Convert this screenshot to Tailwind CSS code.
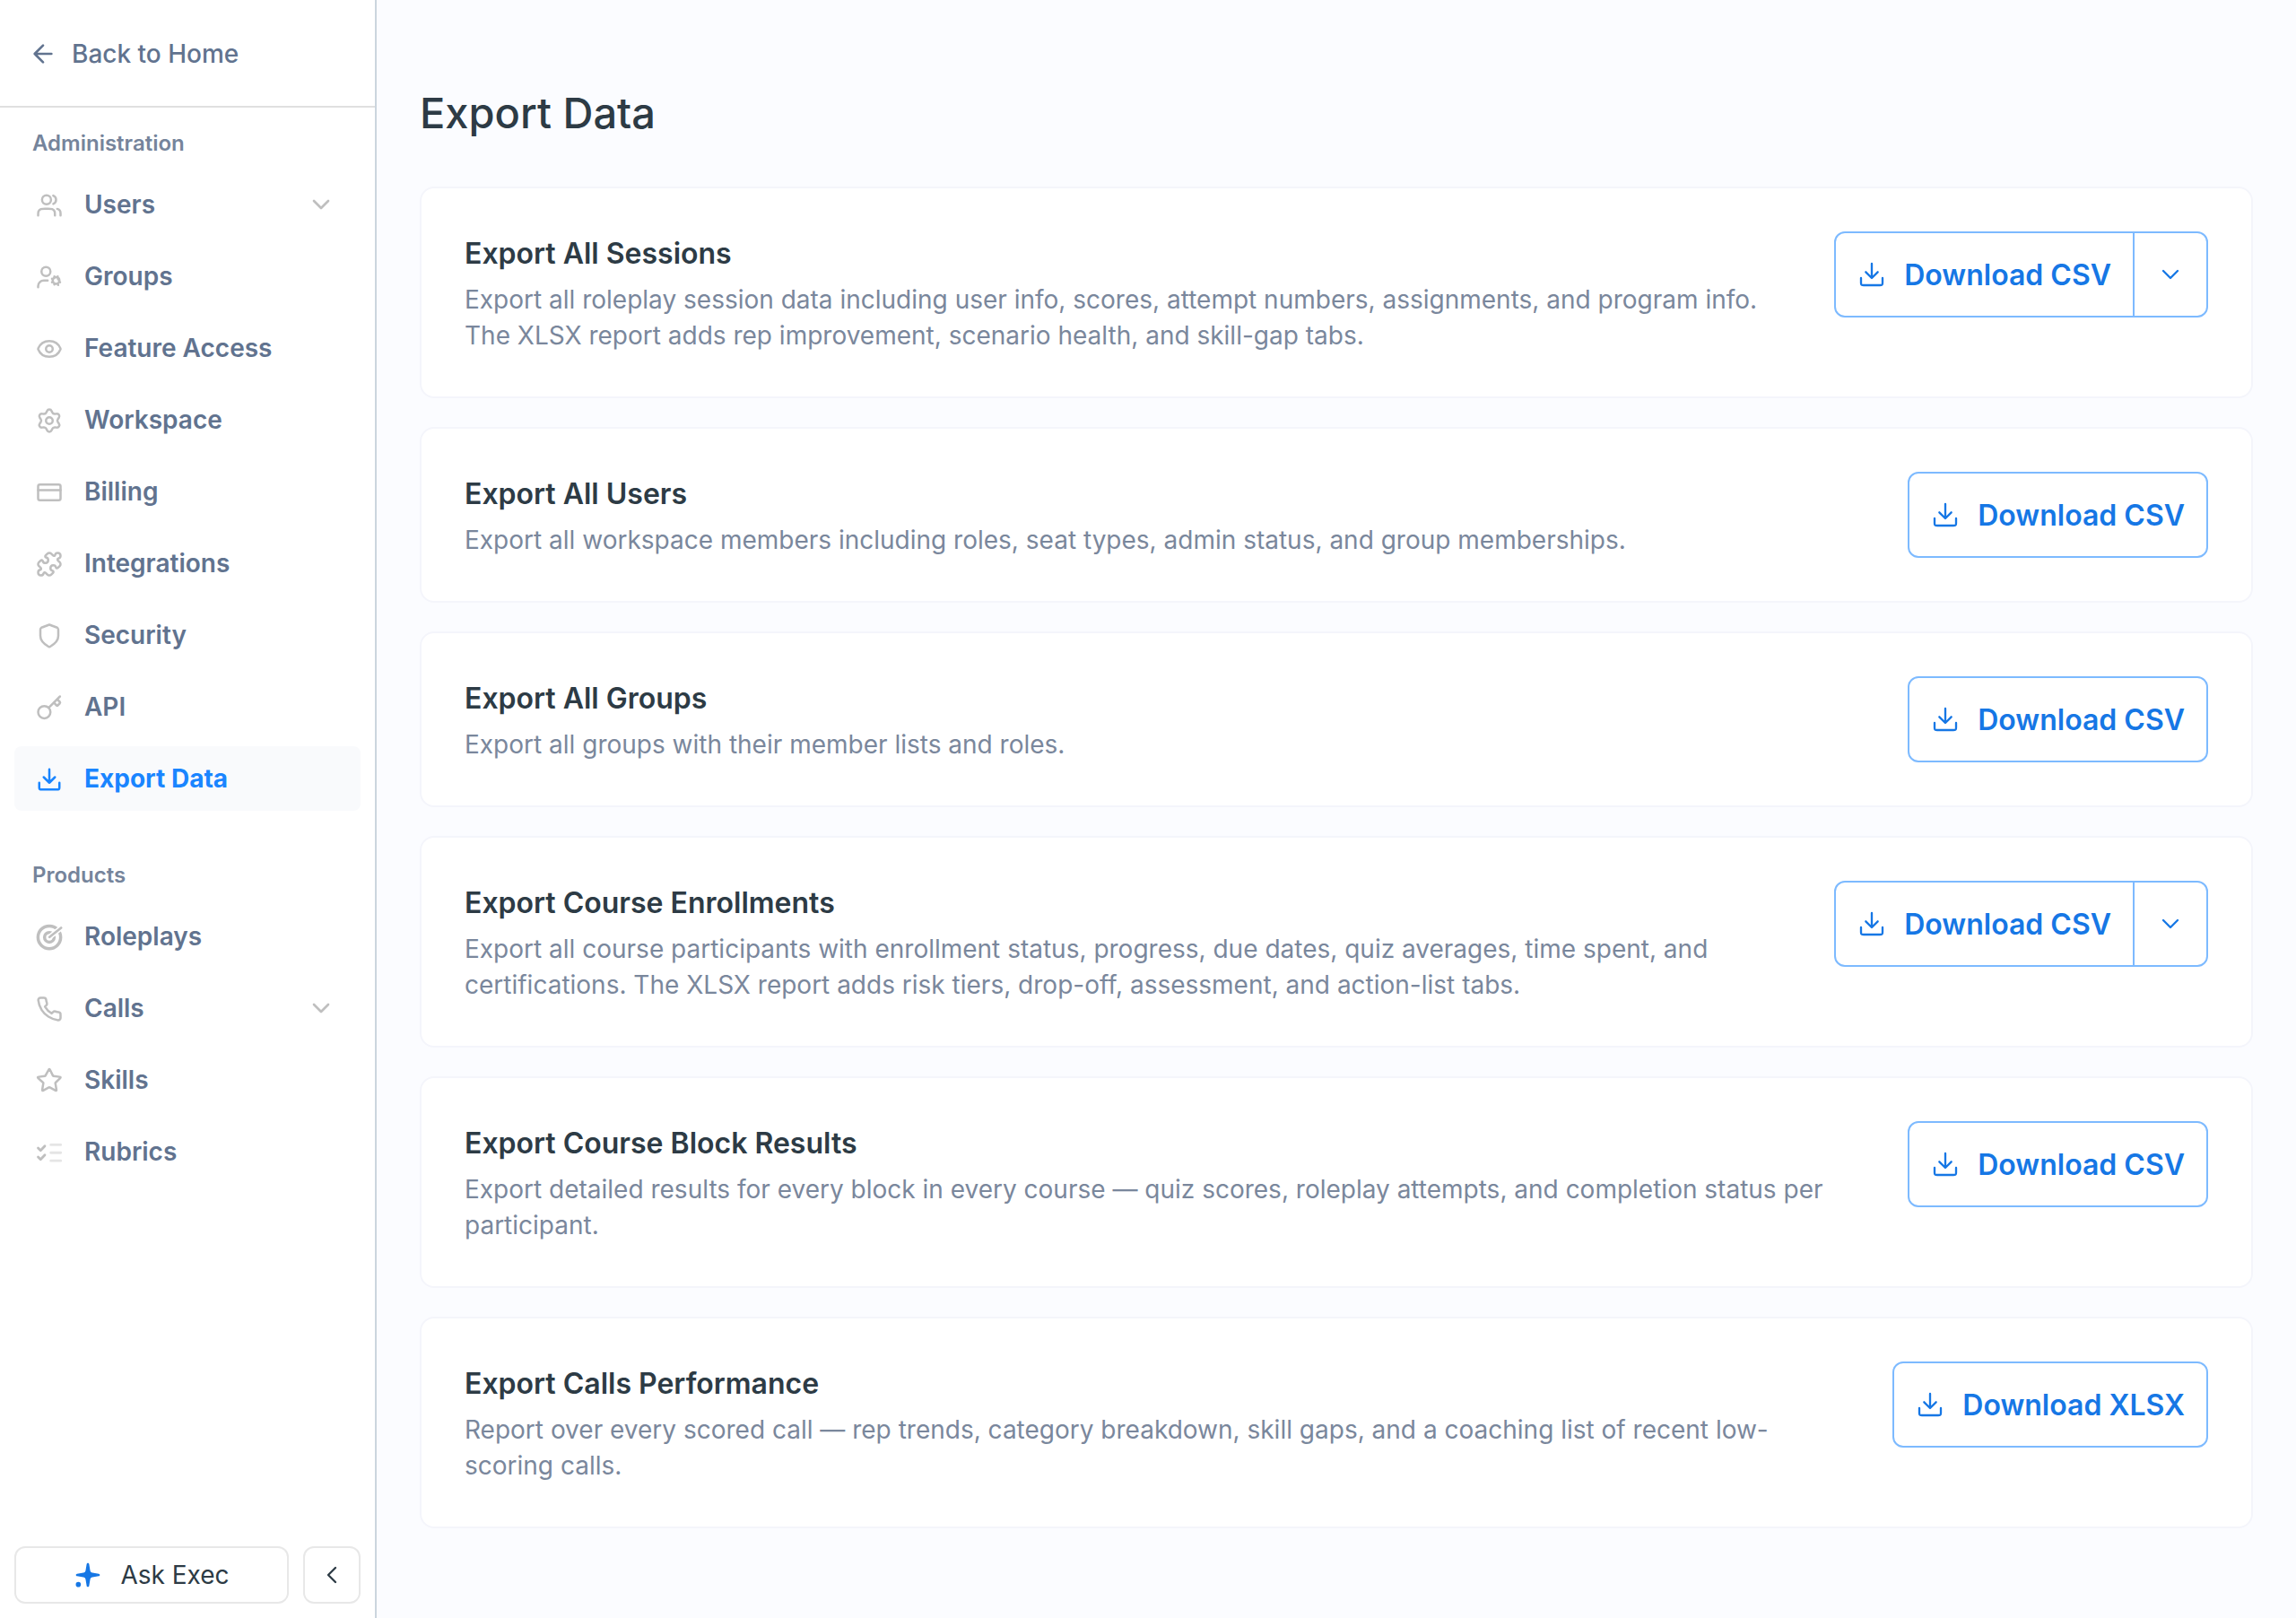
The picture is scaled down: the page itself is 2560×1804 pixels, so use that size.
<!DOCTYPE html>
<html lang="en">
<head>
    <meta charset="UTF-8">
    <meta name="viewport" content="width=device-width, initial-scale=1.0">
    <script src="https://cdn.jsdelivr.net/npm/@tailwindcss/browser@4"></script>
    <title>Export Data</title>
</head>
<body class="flex min-h-screen bg-[#fbfcff] font-[Inter,sans-serif] text-[28px] leading-10 text-[#2d3b45]">

<!-- Icon sprite -->
<svg class="hidden">
    <symbol id="i-arrow-left" viewBox="0 0 24 24"><path d="M19 12H5m0 0 7 7m-7-7 7-7"/></symbol>
    <symbol id="i-chevron-down" viewBox="0 0 24 24"><path d="m6 9 6 6 6-6"/></symbol>
    <symbol id="i-chevron-left" viewBox="0 0 24 24"><path d="m15 18-6-6 6-6"/></symbol>
    <symbol id="i-download" viewBox="0 0 24 24"><path d="M21 15v3.8c0 .77 0 1.15-.17 1.45a1.4 1.4 0 0 1-.58.58c-.3.17-.68.17-1.45.17H5.2c-.77 0-1.15 0-1.45-.17a1.4 1.4 0 0 1-.58-.58C3 19.95 3 19.57 3 18.8V15m14-5-5 5m0 0-5-5m5 5V3"/></symbol>
    <symbol id="i-users" viewBox="0 0 24 24"><path d="M22 21v-2a4 4 0 0 0-3-3.87M15.5 3.29a4 4 0 0 1 0 7.42M17 21c0-1.86 0-2.8-.3-3.53a4 4 0 0 0-2.17-2.17C13.8 15 12.86 15 11 15H8c-1.86 0-2.8 0-3.53.3a4 4 0 0 0-2.17 2.17C2 18.2 2 19.14 2 21M13.5 7a4 4 0 1 1-8 0 4 4 0 0 1 8 0Z"/></symbol>
    <symbol id="i-user-cog" viewBox="0 0 24 24"><circle cx="9" cy="7" r="4"/><path d="M2 21v-1a5 5 0 0 1 5-5h3.5"/><circle cx="18" cy="15" r="3"/><path d="m16.5 11.4.4.9m4.7 4.2-.9-.4m-4.2 2.5.4-.9m2.6-6.3-.4.9m-4.7 1.2.9.4m4.2 4.2.4.9m-5.5-2.5.9-.4m5.4-2.6-.9.4"/></symbol>
    <symbol id="i-eye" viewBox="0 0 24 24"><path d="M2.06 12.35a1 1 0 0 1 0-.7C3.7 7.6 7.6 5 12 5s8.3 2.6 9.94 6.65a1 1 0 0 1 0 .7C20.3 16.4 16.4 19 12 19s-8.3-2.6-9.94-6.65Z"/><circle cx="12" cy="12" r="3"/></symbol>
    <symbol id="i-settings" viewBox="0 0 24 24"><circle cx="12" cy="12" r="3"/><path d="m9.4 19.37.58 1.32a2.21 2.21 0 0 0 4.04 0l.59-1.32a2.43 2.43 0 0 1 2.47-1.43l1.43.16a2.21 2.21 0 0 0 2.02-3.5l-.85-1.17a2.43 2.43 0 0 1 0-2.86l.85-1.17a2.21 2.21 0 0 0-2.02-3.5l-1.43.16a2.43 2.43 0 0 1-2.48-1.43l-.58-1.32a2.21 2.21 0 0 0-4.04 0l-.59 1.32a2.43 2.43 0 0 1-2.48 1.43L5.49 5.9a2.21 2.21 0 0 0-2.02 3.5l.85 1.17a2.43 2.43 0 0 1 0 2.86l-.85 1.17a2.21 2.21 0 0 0 2.02 3.5l1.43-.16a2.43 2.43 0 0 1 2.48 1.43Z"/></symbol>
    <symbol id="i-card" viewBox="0 0 24 24"><rect x="2" y="5" width="20" height="14" rx="1.6"/><path d="M2 10h20"/></symbol>
    <symbol id="i-puzzle" viewBox="0 0 24 24"><path d="M15.39 4.39a1 1 0 0 0 1.68-.474 2.5 2.5 0 1 1 3.014 3.015 1 1 0 0 0-.474 1.68l1.683 1.682a2.414 2.414 0 0 1 0 3.414L19.61 15.39a1 1 0 0 1-1.68-.474 2.5 2.5 0 1 0-3.014 3.015 1 1 0 0 1 .474 1.68l-1.683 1.682a2.414 2.414 0 0 1-3.414 0L8.61 19.61a1 1 0 0 0-1.68.474 2.5 2.5 0 1 1-3.014-3.015 1 1 0 0 0 .474-1.68l-1.683-1.682a2.414 2.414 0 0 1 0-3.414L4.39 8.61a1 1 0 0 1 1.68.474 2.5 2.5 0 1 0 3.014-3.015 1 1 0 0 1-.474-1.68l1.683-1.682a2.414 2.414 0 0 1 3.414 0z"/></symbol>
    <symbol id="i-shield" viewBox="0 0 24 24"><path d="M20 12c0 4.9-5.35 8.47-7.3 9.61-.22.13-.33.2-.49.23a1 1 0 0 1-.42 0c-.16-.03-.27-.1-.49-.23C9.35 20.47 4 16.9 4 12V7.22c0-.8 0-1.2.13-1.55a2 2 0 0 1 .55-.79c.28-.24.65-.38 1.4-.66l5.36-2.01c.2-.08.31-.12.42-.14a1 1 0 0 1 .28 0c.11.02.22.06.42.14l5.36 2.01c.75.28 1.12.42 1.4.66.25.21.44.48.55.79.13.34.13.74.13 1.55V12Z"/></symbol>
    <symbol id="i-key" viewBox="0 0 24 24"><circle cx="7.5" cy="16" r="5.5"/><path d="M11.4 12.1 21.5 2m-5.5 5.5 2.3 2.3a1 1 0 0 0 1.4 0l1.6-1.6a1 1 0 0 0 0-1.4L19 4.5"/></symbol>
    <symbol id="i-target" viewBox="0 0 24 24"><circle cx="12" cy="12" r="10.1" stroke-width="2.8"/><circle cx="12" cy="12" r="4.3" stroke-width="2.8"/><path d="M12 12 23.5 2.8" stroke="#fff" stroke-width="4.6"/><path d="M12.2 11.8 22.5 3.6" stroke-width="2.2"/></symbol>
    <symbol id="i-phone" viewBox="0 0 24 24"><path d="M22 16.92v3a2 2 0 0 1-2.18 2 19.79 19.79 0 0 1-8.63-3.07 19.5 19.5 0 0 1-6-6 19.79 19.79 0 0 1-3.07-8.67A2 2 0 0 1 4.11 2h3a2 2 0 0 1 2 1.72c.13.96.36 1.9.7 2.81a2 2 0 0 1-.45 2.11L8.09 9.91a16 16 0 0 0 6 6l1.27-1.27a2 2 0 0 1 2.11-.45c.91.34 1.85.57 2.81.7A2 2 0 0 1 22 16.92Z"/></symbol>
    <symbol id="i-star" viewBox="0 0 24 24"><path d="M11.28 2.45c.23-.47.35-.7.5-.78a.5.5 0 0 1 .44 0c.15.08.27.31.5.78l2.39 4.83c.07.14.1.2.15.26a.5.5 0 0 0 .16.12c.07.03.15.04.3.06l5.3.78c.51.07.77.11.88.24a.5.5 0 0 1 .14.41c-.02.17-.21.35-.58.71l-3.84 3.74c-.11.11-.17.17-.2.23a.5.5 0 0 0-.07.2c0 .07.01.15.04.3l.91 5.28c.09.51.13.77.05.92a.5.5 0 0 1-.36.26c-.17.03-.39-.09-.85-.33l-4.74-2.5c-.14-.07-.2-.11-.28-.12a.5.5 0 0 0-.2 0c-.07.01-.14.05-.28.12l-4.74 2.5c-.46.24-.69.36-.85.33a.5.5 0 0 1-.36-.26c-.08-.15-.04-.41.05-.92l.91-5.28c.03-.15.04-.23.04-.3a.5.5 0 0 0-.07-.2 1 1 0 0 0-.2-.23L2.26 9.86c-.37-.36-.56-.54-.58-.71a.5.5 0 0 1 .14-.41c.11-.13.37-.17.88-.24l5.3-.78c.15-.02.23-.03.3-.06a.5.5 0 0 0 .16-.12c.05-.06.08-.12.15-.26l2.67-4.83Z"/></symbol>
    <symbol id="i-checklist" viewBox="0 0 24 24"><path d="m2 8 2.2 2.2L8 6.2M2 16l2.2 2.2L8 14.2" stroke-width="2.2"/><path d="M13.3 5.1h8.9m-8.9 7.1h8.9m-8.9 7.1h8.9" stroke-width="2.2" opacity=".4"/></symbol>
    <symbol id="i-sparkle" viewBox="0 0 24 24"><path fill="currentColor" stroke="none" d="M12 2c.6 0 .9.4 1 .9l.9 5.3c.2 1.1.8 1.8 1.9 1.9l5.3.9c.5.1.9.4.9 1s-.4.9-.9 1l-5.3.9c-1.1.1-1.7.8-1.9 1.9l-.9 5.3c-.1.5-.4.9-1 .9s-.9-.4-1-.9l-.9-5.3c-.2-1.1-.8-1.8-1.9-1.9L2.900 13c-.5-.1-.9-.4-.9-1s.4-.9.9-1l5.300-.9c1.100-.1 1.700-.8 1.900-1.900l.9-5.300c.1-.5.4-.9 1-.9Z"/><circle cx="4" cy="20" r="2.1" fill="currentColor" stroke="none"/></symbol>
</svg>

<aside class="sticky top-0 flex h-screen w-[420px] shrink-0 flex-col border-r-2 border-[#cbd5de] bg-white text-[#61738f]">
    <a href="#" class="flex h-[120px] shrink-0 items-center gap-4 border-b-2 border-[#e0e0e0] px-8 pt-0.5 font-medium">
        <svg class="size-8 fill-none stroke-current stroke-2 [stroke-linecap:round] [stroke-linejoin:round]"><use href="#i-arrow-left"/></svg>
        Back to Home
    </a>

    <nav class="flex grow flex-col overflow-y-auto px-4">
        <h2 class="px-5 pt-6 pb-4 text-2xl font-semibold text-[#75849b]">Administration</h2>
        <ul id="admin-nav" class="flex flex-col gap-2"></ul>
        <h2 class="px-5 pt-14 pb-4 text-2xl font-semibold text-[#75849b]">Products</h2>
        <ul id="product-nav" class="flex flex-col gap-2"></ul>
    </nav>

    <div class="flex gap-4 p-4">
        <button class="flex h-16 grow items-center justify-center gap-5 rounded-xl border-2 border-[#e8e8e8] text-[#2d3b45]">
            <svg class="size-8 text-[#1677e5]"><use href="#i-sparkle"/></svg>
            Ask Exec
        </button>
        <button aria-label="Collapse sidebar" class="flex size-16 items-center justify-center rounded-xl border-2 border-[#e8e8e8] text-[#2d3b45]">
            <svg class="size-8 fill-none stroke-current [stroke-width:1.75] [stroke-linecap:round] [stroke-linejoin:round]"><use href="#i-chevron-left"/></svg>
        </button>
    </div>
</aside>

<main class="min-w-0 grow px-12 pt-24">
    <h1 class="mb-[52px] text-[47px] leading-[60px] font-medium">Export Data</h1>
    <div id="exports" class="flex flex-col gap-8 pb-24"></div>
</main>

<script>
    const adminItems = [
        {label: 'Users', icon: 'users', expandable: true},
        {label: 'Groups', icon: 'user-cog'},
        {label: 'Feature Access', icon: 'eye'},
        {label: 'Workspace', icon: 'settings'},
        {label: 'Billing', icon: 'card'},
        {label: 'Integrations', icon: 'puzzle'},
        {label: 'Security', icon: 'shield'},
        {label: 'API', icon: 'key'},
        {label: 'Export Data', icon: 'download', active: true}
    ];

    const productItems = [
        {label: 'Roleplays', icon: 'target'},
        {label: 'Calls', icon: 'phone', expandable: true},
        {label: 'Skills', icon: 'star'},
        {label: 'Rubrics', icon: 'checklist'}
    ];

    const exportItems = [
        {
            title: 'Export All Sessions',
            text: 'Export all roleplay session data including user info, scores, attempt numbers, assignments, and program info. The XLSX report adds rep improvement, scenario health, and skill-gap tabs.',
            format: 'CSV',
            menu: true
        },
        {
            title: 'Export All Users',
            text: 'Export all workspace members including roles, seat types, admin status, and group memberships.',
            format: 'CSV'
        },
        {
            title: 'Export All Groups',
            text: 'Export all groups with their member lists and roles.',
            format: 'CSV'
        },
        {
            title: 'Export Course Enrollments',
            text: 'Export all course participants with enrollment status, progress, due dates, quiz averages, time spent, and certifications. The XLSX report adds risk tiers, drop-off, assessment, and action-list tabs.',
            format: 'CSV',
            menu: true
        },
        {
            title: 'Export Course Block Results',
            text: 'Export detailed results for every block in every course — quiz scores, roleplay attempts, and completion status per participant.',
            format: 'CSV'
        },
        {
            title: 'Export Calls Performance',
            text: 'Report over every scored call — rep trends, category breakdown, skill gaps, and a coaching list of recent low-scoring calls.',
            format: 'XLSX'
        }
    ];

    function navItem({label, icon, active, expandable}) {
        const rowColor = active ? 'bg-[#f9fafc] font-bold text-[#1a85ff]' : 'font-semibold';
        const iconColor = active ? 'text-[#1a85ff]' : 'text-[#bfbfbf]';
        const chevron = expandable
            ? '<svg class="ml-auto size-8 fill-none stroke-[#bfbfbf] stroke-2 [stroke-linecap:round] [stroke-linejoin:round]"><use href="#i-chevron-down"/></svg>'
            : '';
        return `<li><a href="#" class="flex h-18 items-center gap-6 rounded-lg pr-7 pl-6 ${rowColor}">
            <svg class="mt-0.5 size-[30px] shrink-0 fill-none stroke-current ${iconColor} stroke-2 [stroke-linecap:round] [stroke-linejoin:round]"><use href="#i-${icon}"/></svg>
            ${label}${chevron}
        </a></li>`;
    }

    function exportCard({title, text, format, menu}) {
        const menuButton = menu
            ? `<button aria-label="More formats" class="-ml-0.5 flex h-24 w-[84px] items-center justify-center rounded-r-xl border-2 border-[#7dbaff]">
                <svg class="size-8 fill-none stroke-current [stroke-width:1.75] [stroke-linecap:round] [stroke-linejoin:round]"><use href="#i-chevron-down"/></svg>
            </button>`
            : '';
        return `<section class="flex items-start justify-between gap-20 rounded-2xl border-2 border-[#f4f5fb] bg-white p-12">
            <div>
                <h3 class="mb-1.5 text-[32px] leading-[50px] font-semibold">${title}</h3>
                <p class="text-[#7a879c]">${text}</p>
            </div>
            <div class="flex shrink-0 text-[#1677e5]">
                <button class="flex h-24 items-center gap-5 border-2 border-[#7dbaff] px-6 text-[32px] font-semibold ${menu ? 'rounded-l-xl' : 'rounded-xl'}">
                    <svg class="size-8 fill-none stroke-current [stroke-width:1.75] [stroke-linecap:round] [stroke-linejoin:round]"><use href="#i-download"/></svg>
                    <span class="pt-0.5">Download ${format}</span>
                </button>${menuButton}
            </div>
        </section>`;
    }

    document.getElementById('admin-nav').innerHTML = adminItems.map(navItem).join('');
    document.getElementById('product-nav').innerHTML = productItems.map(navItem).join('');
    document.getElementById('exports').innerHTML = exportItems.map(exportCard).join('');
</script>
</body>
</html>
